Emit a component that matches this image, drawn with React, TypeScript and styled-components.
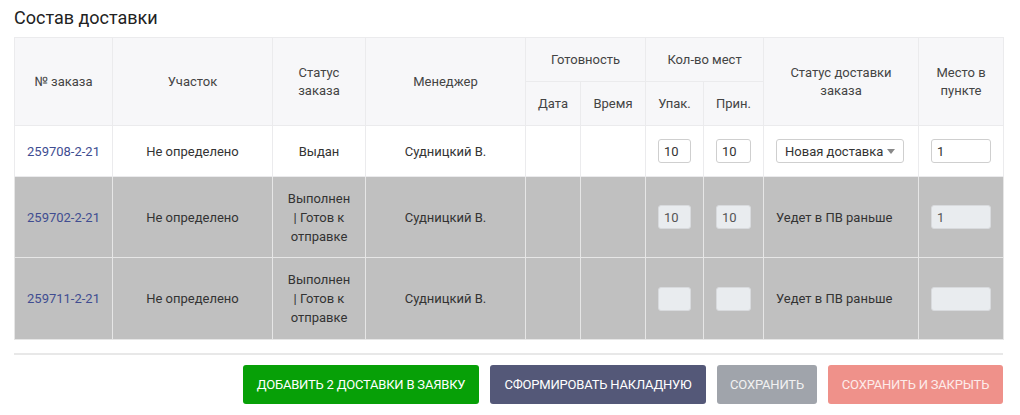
import React from 'react';
import styled, { createGlobalStyle } from 'styled-components';

const GlobalStyle = createGlobalStyle`
  body {
    margin: 0;
    background: #ffffff;
    font-family: Roboto, "Noto Sans", sans-serif;
    color: #333;
  }
`;

const Wrapper = styled.div`
  padding: 6px 17px 0 14px;
  display: flex;
  flex-direction: column;
`;

const Title = styled.h2`
  font-size: 18px;
  line-height: 24px;
  font-weight: 400;
  color: #222;
  margin: 0 0 7px;
`;

const Table = styled.table`
  width: 989px;
  table-layout: fixed;
  border-collapse: collapse;
  font-size: 13px;
`;

const Th = styled.th`
  background: #f7f7f9;
  border: 1px solid #ebebed;
  font-weight: 400;
  color: #444;
  line-height: 18px;
  padding: 0 8px;
  height: 43px;
  vertical-align: middle;
  text-align: center;
`;

const Row = styled.tr<{ $muted?: boolean }>`
  background: ${({ $muted }) => ($muted ? '#c0c0c0' : '#ffffff')};
  td {
    border: 1px solid ${({ $muted }) => ($muted ? '#e6e6e6' : '#ebebed')};
  }
`;

const Td = styled.td<{ $left?: boolean; $h?: number }>`
  height: ${({ $h }) => ($h ? `${$h}px` : 'auto')};
  padding: 0 12px;
  line-height: 19px;
  color: #333;
  text-align: ${({ $left }) => ($left ? 'left' : 'center')};
  vertical-align: middle;
`;

const StatusCell = styled(Td)`
  padding: 0 8px;
`;

const OrderLink = styled.a`
  color: #404d91;
  text-decoration: none;
`;

const Field = styled.input`
  box-sizing: border-box;
  width: 100%;
  height: 24px;
  border: 1px solid #cfcfcf;
  border-radius: 3px;
  padding: 0 5px;
  font: inherit;
  font-size: 13px;
  color: #333;
  background: #fff;
  display: block;

  &:disabled {
    background: #e9ecef;
    border-color: #d8dadd;
    color: #555;
  }
`;

const Select = styled.div`
  box-sizing: border-box;
  width: 128px;
  height: 24px;
  border: 1px solid #cfcfcf;
  border-radius: 3px;
  padding: 0 8px;
  display: flex;
  align-items: center;
  justify-content: space-between;
  color: #333;
  background: #fff;
`;

const Caret = styled.span`
  width: 0;
  height: 0;
  border-left: 4px solid transparent;
  border-right: 4px solid transparent;
  border-top: 5px solid #888;
`;

const Divider = styled.hr`
  width: 989px;
  margin: 13px 0 10px;
  border: 0;
  border-top: 2px solid #e8e8e8;
`;

const Actions = styled.div`
  width: 989px;
  display: flex;
  justify-content: flex-end;
  gap: 11px;
`;

const Button = styled.button<{ $bg: string; $fg?: string; $w: number }>`
  width: ${({ $w }) => $w}px;
  height: 39px;
  border: 0;
  border-radius: 3px;
  background: ${({ $bg }) => $bg};
  color: ${({ $fg }) => $fg || '#fff'};
  font-family: Roboto, sans-serif;
  font-size: 13px;
  font-weight: 400;
  text-transform: uppercase;
  letter-spacing: -0.2px;
  padding: 0;
`;

type Order = {
  id: string;
  status: string[];
  pack: string;
  recv: string;
  place: string;
  muted: boolean;
  h: number;
};

const orders: Order[] = [
  { id: '259708-2-21', status: ['Выдан'], pack: '10', recv: '10', place: '1', muted: false, h: 50 },
  { id: '259702-2-21', status: ['Выполнен', '| Готов к', 'отправке'], pack: '10', recv: '10', place: '1', muted: true, h: 80 },
  { id: '259711-2-21', status: ['Выполнен', '| Готов к', 'отправке'], pack: '', recv: '', place: '', muted: true, h: 81 },
];

const widths = [98, 160, 93, 160, 55, 65, 58, 60, 155, 85];

const App = () => (
  <Wrapper>
    <GlobalStyle />
    <Title>Состав доставки</Title>
    <Table>
      <colgroup>
        {widths.map((w, i) => (
          <col key={i} style={{ width: w }} />
        ))}
      </colgroup>
      <thead>
        <tr>
          <Th rowSpan={2}>№ заказа</Th>
          <Th rowSpan={2}>Участок</Th>
          <Th rowSpan={2}>Статус заказа</Th>
          <Th rowSpan={2}>Менеджер</Th>
          <Th colSpan={2}>Готовность</Th>
          <Th colSpan={2}>Кол-во мест</Th>
          <Th rowSpan={2}>Статус доставки заказа</Th>
          <Th rowSpan={2}>Место в пункте</Th>
        </tr>
        <tr>
          <Th>Дата</Th>
          <Th>Время</Th>
          <Th>Упак.</Th>
          <Th>Прин.</Th>
        </tr>
      </thead>
      <tbody>
        {orders.map((o) => (
          <Row key={o.id} $muted={o.muted}>
            <Td $h={o.h}>
              <OrderLink href="#">{o.id}</OrderLink>
            </Td>
            <Td>Не определено</Td>
            <StatusCell>
              {o.status.map((s) => (
                <div key={s}>{s}</div>
              ))}
            </StatusCell>
            <Td>Судницкий В.</Td>
            <Td />
            <Td />
            <Td>
              <Field defaultValue={o.pack} disabled={o.muted} />
            </Td>
            <Td>
              <Field defaultValue={o.recv} disabled={o.muted} />
            </Td>
            <Td $left>
              {o.muted ? (
                'Уедет в ПВ раньше'
              ) : (
                <Select>
                  Новая доставка
                  <Caret />
                </Select>
              )}
            </Td>
            <Td>
              <Field defaultValue={o.place} disabled={o.muted} />
            </Td>
          </Row>
        ))}
      </tbody>
    </Table>
    <Divider />
    <Actions>
      <Button $bg="#07a007" $w={236}>Добавить 2 доставки в заявку</Button>
      <Button $bg="#545878" $w={216}>Сформировать накладную</Button>
      <Button $bg="#a0a4ab" $fg="#f2f2f2" $w={100}>Сохранить</Button>
      <Button $bg="#ef918a" $fg="#fdecea" $w={175}>Сохранить и закрыть</Button>
    </Actions>
  </Wrapper>
);

export default App;
